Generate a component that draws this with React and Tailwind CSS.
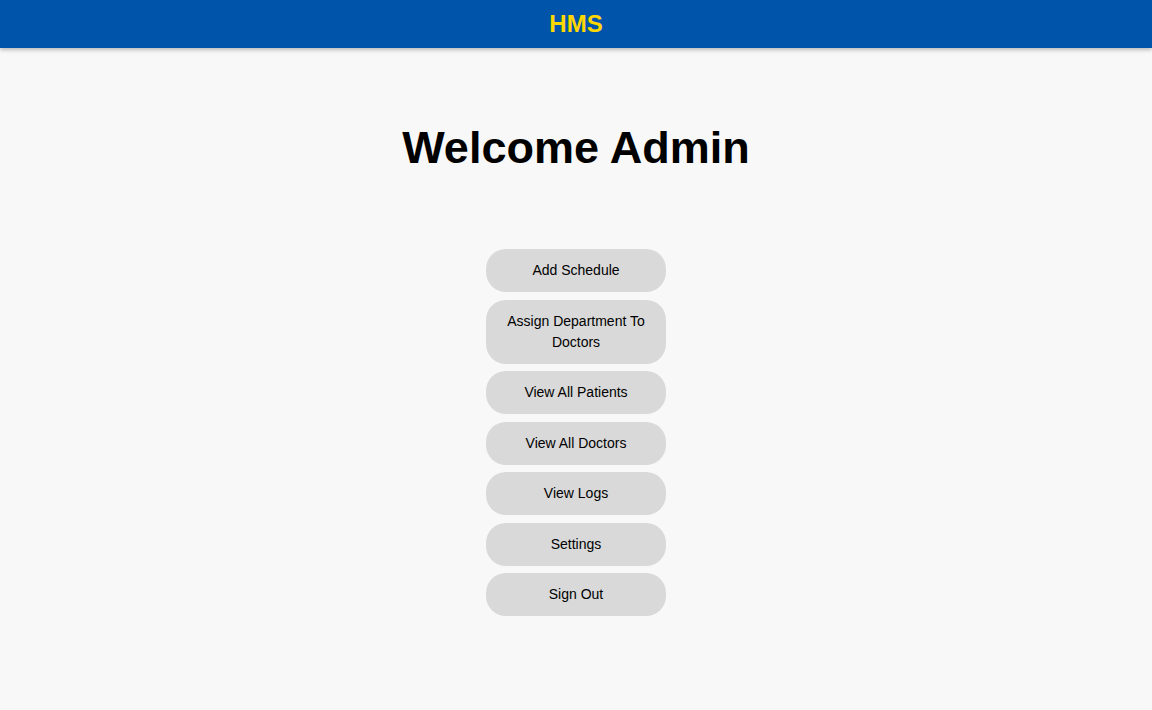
import React from 'react';

const items = [
  'Add Schedule',
  'Assign Department To Doctors',
  'View All Patients',
  'View All Doctors',
  'View Logs',
  'Settings',
  'Sign Out',
];

export default function App() {
  return (
    <div className="min-h-[710px] bg-[#f8f8f8] font-['Liberation_Sans',Arial,sans-serif]">
      <header className="h-12 bg-[#0055aa] flex items-center justify-center shadow-[0_2px_4px_rgba(0,0,0,0.25)]">
        <span className="text-[24px] font-bold text-[#ffd700] leading-none">HMS</span>
      </header>

      <main className="flex flex-col items-center">
        <h1 className="mt-[74px] text-[45px] font-bold leading-[52px] text-black">Welcome Admin</h1>

        <div className="mt-[75px] flex flex-col items-center gap-[7.5px]">
          {items.map(label => (
            <button
              key={label}
              className="w-[180px] px-4 py-[11px] rounded-[20px] bg-[#d9d9d9] text-[14px] leading-[21px] text-black text-center"
            >
              {label}
            </button>
          ))}
        </div>
      </main>
    </div>
  );
}
